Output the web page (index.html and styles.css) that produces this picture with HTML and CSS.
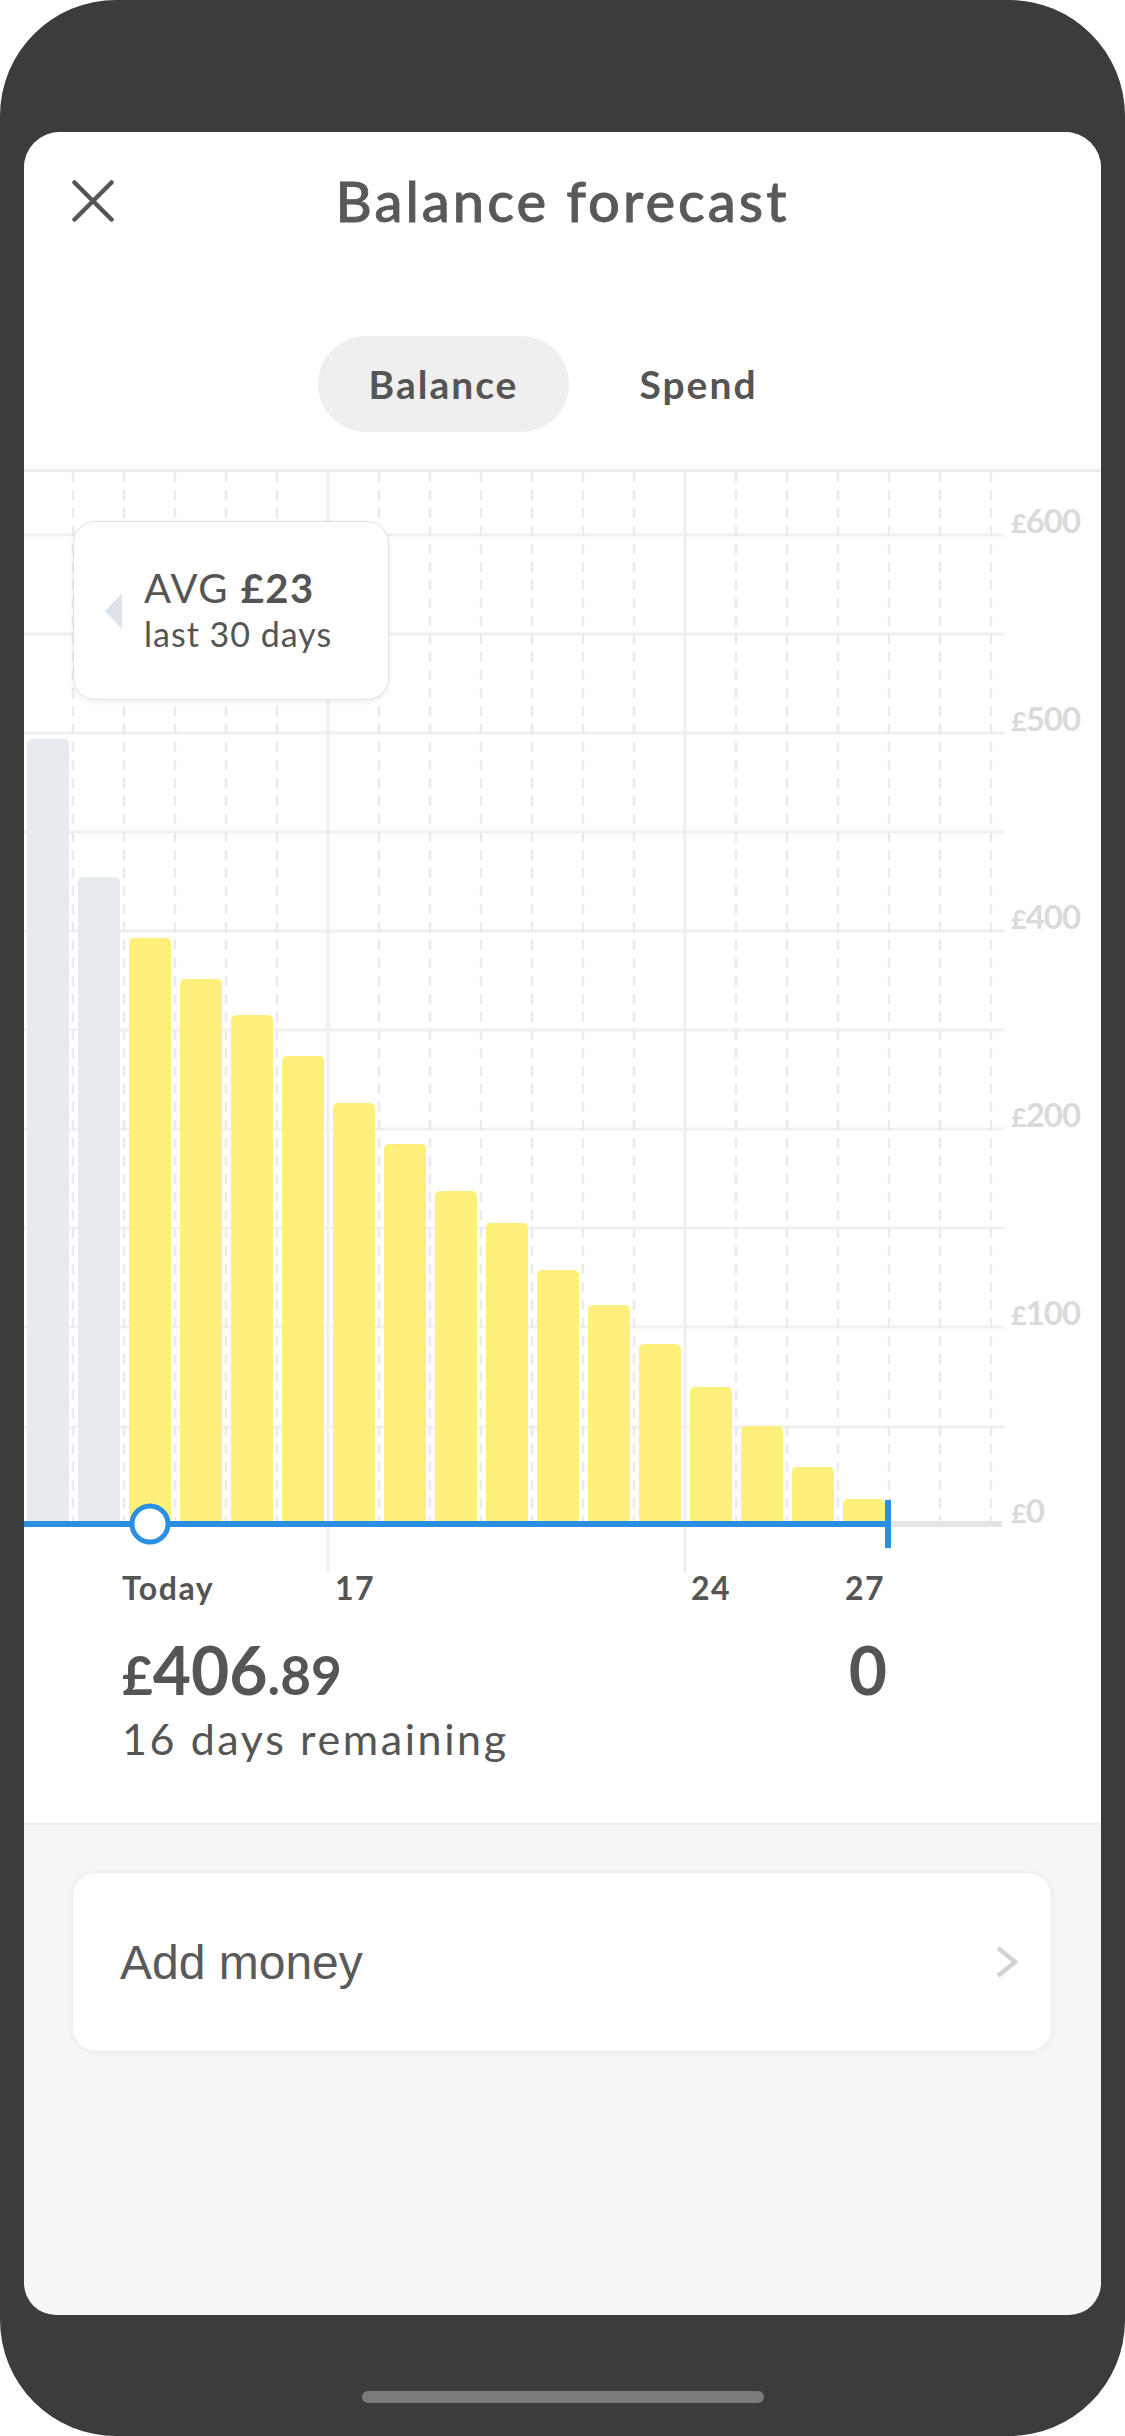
FILE: index.html
```html
<!DOCTYPE html>
<html lang="en">
<head>
<meta charset="utf-8">
<title>Balance forecast</title>
<link rel="stylesheet" href="styles.css">
</head>
<body>
<div class="phone">
  <div class="screen">
    <section class="top">
      <header class="header">
        <button class="close" aria-label="Close">
          <svg width="42" height="42" viewBox="0 0 42 42"><path class="icon-stroke" d="M2.5 2.5 L39.5 39.5 M39.5 2.5 L2.5 39.5"/></svg>
        </button>
        <h1 class="title">Balance forecast</h1>
        <span class="header-spacer"></span>
      </header>

      <nav class="tabs">
        <span class="tab tab-active">Balance</span>
        <span class="tab">Spend</span>
      </nav>

      <div class="chart">
        <svg class="chart-canvas" width="1077" height="1138" viewBox="0 0 1077 1138">
          <g class="grid-h">
            <line x1="0" y1="63" x2="980" y2="63"/>
            <line x1="0" y1="162" x2="980" y2="162"/>
            <line x1="0" y1="261" x2="980" y2="261"/>
            <line x1="0" y1="360" x2="980" y2="360"/>
            <line x1="0" y1="459" x2="980" y2="459"/>
            <line x1="0" y1="558" x2="980" y2="558"/>
            <line x1="0" y1="657" x2="980" y2="657"/>
            <line x1="0" y1="756" x2="980" y2="756"/>
            <line x1="0" y1="855" x2="980" y2="855"/>
            <line x1="0" y1="955" x2="980" y2="955"/>
          </g>
          <g class="grid-v">
            <line x1="49" y1="0" x2="49" y2="1049"/>
            <line x1="100" y1="0" x2="100" y2="1049"/>
            <line x1="151" y1="0" x2="151" y2="1049"/>
            <line x1="202" y1="0" x2="202" y2="1049"/>
            <line x1="253" y1="0" x2="253" y2="1049"/>
            <line x1="355" y1="0" x2="355" y2="1049"/>
            <line x1="406" y1="0" x2="406" y2="1049"/>
            <line x1="457" y1="0" x2="457" y2="1049"/>
            <line x1="508" y1="0" x2="508" y2="1049"/>
            <line x1="559" y1="0" x2="559" y2="1049"/>
            <line x1="610" y1="0" x2="610" y2="1049"/>
            <line x1="712" y1="0" x2="712" y2="1049"/>
            <line x1="763" y1="0" x2="763" y2="1049"/>
            <line x1="814" y1="0" x2="814" y2="1049"/>
            <line x1="865" y1="0" x2="865" y2="1049"/>
            <line x1="916" y1="0" x2="916" y2="1049"/>
            <line x1="967" y1="0" x2="967" y2="1049"/>
          </g>
          <g class="grid-solid">
            <line x1="304" y1="0" x2="304" y2="1100"/>
            <line x1="661" y1="0" x2="661" y2="1100"/>
          </g>
          <g class="bars-past">
            <rect x="3" y="267" width="42" height="787" rx="5"/>
            <rect x="54" y="405" width="42" height="649" rx="5"/>
          </g>
          <g class="bars-future">
            <rect x="105" y="466" width="42" height="588" rx="5"/>
            <rect x="156" y="507" width="42" height="547" rx="5"/>
            <rect x="207" y="543" width="42" height="511" rx="5"/>
            <rect x="258" y="584" width="42" height="470" rx="5"/>
            <rect x="309" y="631" width="42" height="423" rx="5"/>
            <rect x="360" y="672" width="42" height="382" rx="5"/>
            <rect x="411" y="719" width="42" height="335" rx="5"/>
            <rect x="462" y="751" width="42" height="303" rx="5"/>
            <rect x="513" y="798" width="42" height="256" rx="5"/>
            <rect x="564" y="833" width="42" height="221" rx="5"/>
            <rect x="615" y="872" width="42" height="182" rx="5"/>
            <rect x="666" y="915" width="42" height="139" rx="5"/>
            <rect x="717" y="954" width="42" height="100" rx="5"/>
            <rect x="768" y="995" width="42" height="59" rx="5"/>
            <rect x="819" y="1027" width="42" height="27" rx="5"/>
          </g>
          <rect class="axis-grey" x="0" y="1049" width="978" height="6"/>
          <rect class="axis-blue" x="0" y="1049" width="866" height="6"/>
          <rect class="axis-blue" x="861" y="1028" width="6" height="48"/>
          <circle class="marker" cx="126" cy="1052" r="18"/>
        </svg>

        <div class="tooltip">
          <span class="tip-arrow"></span>
          <div class="tip-main">AVG <b>£23</b></div>
          <div class="tip-sub">last 30 days</div>
        </div>

        <div class="y-axis">
          <span class="y-label"><span class="cur">£</span>600</span>
          <span class="y-label"><span class="cur">£</span>500</span>
          <span class="y-label"><span class="cur">£</span>400</span>
          <span class="y-label"><span class="cur">£</span>200</span>
          <span class="y-label"><span class="cur">£</span>100</span>
          <span class="y-label"><span class="cur">£</span>0</span>
        </div>

        <span class="x-label x-today">Today</span>
        <span class="x-label x-17">17</span>
        <span class="x-label x-24">24</span>
        <span class="x-label x-27">27</span>
      </div>

      <div class="summary">
        <div class="amount-row">
          <div class="amount"><span class="small">£</span>406<span class="small">.89</span></div>
          <div class="count">0</div>
        </div>
        <div class="remaining">16 days remaining</div>
      </div>
    </section>

    <section class="actions">
      <div class="card">
        <span class="card-label">Add money</span>
        <svg class="chevron" width="22" height="32" viewBox="0 0 22 32"><polyline points="2,2 19,16 2,30"/></svg>
      </div>
    </section>
  </div>
  <div class="home-bar"></div>
</div>
</body>
</html>
```

FILE: styles.css
```css
* {
  box-sizing: border-box;
  margin: 0;
  padding: 0;
}

html,
body {
  width: 1125px;
  height: 2436px;
}

body {
  background: #ffffff;
  font-family: Lato, "Noto Sans", sans-serif;
  color: #555555;
  overflow: hidden;
}

.phone {
  width: 1125px;
  height: 2436px;
  background: #3c3c3c;
  border-radius: 116px;
  padding: 132px 24px 0;
  display: flex;
  flex-direction: column;
  align-items: center;
}

.screen {
  width: 1077px;
  height: 2183px;
  border-radius: 36px 36px 32px 32px;
  overflow: hidden;
  background: #f6f6f6;
  display: flex;
  flex-direction: column;
}

.home-bar {
  width: 402px;
  height: 12px;
  border-radius: 6px;
  background: #7b7b7b;
  margin-top: 76px;
}

/* ---------- top white section ---------- */
.top {
  background: #ffffff;
  border-bottom: 2px solid #ececec;
  padding-bottom: 58px;
}

.header {
  display: grid;
  grid-template-columns: 1fr auto 1fr;
  align-items: center;
  padding-top: 36px;
}

.close {
  justify-self: start;
  margin-left: 48px;
  width: 42px;
  height: 42px;
  background: none;
  border: 0;
  display: block;
}

.close svg {
  display: block;
}

.icon-stroke {
  fill: none;
  stroke: #555555;
  stroke-width: 4.5;
  stroke-linecap: round;
}

.title {
  font-size: 56px;
  font-weight: 500;
  line-height: 66px;
  color: #595959;
  letter-spacing: 3px;
  -webkit-text-stroke: 0.8px #595959;
  white-space: nowrap;
}

.tabs {
  display: flex;
  justify-content: center;
  gap: 4px;
  padding-left: 17px;
  margin-top: 102px;
}

.tab {
  width: 251px;
  height: 96px;
  border-radius: 48px;
  display: flex;
  align-items: center;
  justify-content: center;
  font-size: 39px;
  font-weight: 700;
  letter-spacing: 2px;
  color: #555555;
}

.tab-active {
  background: #efefef;
}

/* ---------- chart ---------- */
.chart {
  position: relative;
  margin-top: 37px;
  border-top: 3px solid #ededed;
  height: 1141px;
}

.chart-canvas {
  display: block;
}

.grid-h line {
  stroke: #f1f1f1;
  stroke-width: 3;
}

.grid-v line {
  stroke: #ebebeb;
  stroke-width: 2.5;
  stroke-dasharray: 10 8;
}

.grid-solid line {
  stroke: #efefef;
  stroke-width: 3;
}

.bars-past rect {
  fill: #e7eaef;
}

.bars-future rect {
  fill: #fef07a;
}

.axis-grey {
  fill: #e5e5e5;
}

.axis-blue {
  fill: #2b8fe1;
}

.marker {
  fill: #ffffff;
  stroke: #2b8fe1;
  stroke-width: 5;
}

.tooltip {
  position: absolute;
  left: 49px;
  top: 49px;
  width: 316px;
  height: 179px;
  background: #ffffff;
  border: 1.5px solid #e2e2e2;
  border-radius: 22px;
  box-shadow: 0 2px 6px rgba(0, 0, 0, 0.07);
  padding: 44px 0 0 70px;
  color: #555555;
}

.tip-arrow {
  position: absolute;
  left: 30.5px;
  top: 70.5px;
  width: 0;
  height: 0;
  border-top: 18.5px solid transparent;
  border-bottom: 18.5px solid transparent;
  border-right: 17px solid #dde2ea;
}

.tip-main {
  font-size: 40px;
  line-height: 44px;
  font-weight: 400;
  letter-spacing: 1.5px;
  white-space: nowrap;
}

.tip-main b {
  font-weight: 700;
}

.tip-sub {
  font-size: 34px;
  line-height: 44px;
  margin-top: 2px;
  letter-spacing: 1px;
  white-space: nowrap;
}

.y-axis {
  position: absolute;
  left: 987px;
  top: 28px;
  display: flex;
  flex-direction: column;
  gap: 158px;
}

.y-label {
  display: block;
  height: 40px;
  font-size: 33px;
  line-height: 40px;
  font-weight: 700;
  color: #dadada;
  letter-spacing: -1px;
  white-space: nowrap;
}

.y-label .cur {
  font-size: 27px;
  line-height: 1;
}

.x-label {
  position: absolute;
  top: 1096px;
  font-size: 32px;
  line-height: 40px;
  font-weight: 700;
  letter-spacing: 1.5px;
  color: #555555;
}

.x-today {
  left: 98px;
}

.x-17 {
  left: 311px;
}

.x-24 {
  left: 667px;
}

.x-27 {
  left: 821px;
}

/* ---------- summary ---------- */
.summary {
  padding: 20px 214px 0 98px;
}

.amount-row {
  display: flex;
  justify-content: space-between;
  font-size: 66px;
  line-height: 80px;
  font-weight: 700;
  color: #555555;
}

.amount .small {
  font-size: 53px;
  line-height: 60px;
}

.remaining {
  font-size: 43px;
  line-height: 52px;
  margin-top: 3px;
  font-weight: 400;
  letter-spacing: 2.6px;
  color: #555555;
}

/* ---------- actions ---------- */
.actions {
  padding: 47px 49px 0 48px;
}

.card {
  height: 180px;
  background: #ffffff;
  border: 1px solid #efefef;
  border-radius: 24px;
  box-shadow: 0 1px 6px rgba(0, 0, 0, 0.05);
  display: flex;
  align-items: center;
  justify-content: space-between;
  padding: 0 33px 0 47px;
}

.card-label {
  font-family: "Liberation Sans", Arial, sans-serif;
  font-size: 48px;
  color: #5a5a5a;
}

.chevron {
  display: block;
}

.chevron polyline {
  fill: none;
  stroke: #d2d2d2;
  stroke-width: 4.5;
}
```
